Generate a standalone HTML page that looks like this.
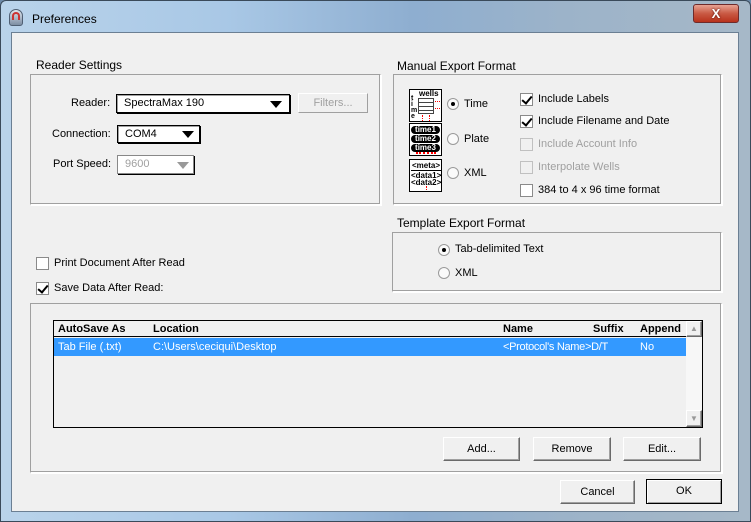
<!DOCTYPE html>
<html><head><meta charset="utf-8"><style>
*{box-sizing:border-box;margin:0;padding:0}
body{width:751px;height:522px;overflow:hidden;background:#6d8aa8;font-family:"Liberation Sans",Arial,sans-serif;font-size:11px;color:#000;position:relative}
.a{position:absolute}
.frame{left:0;top:0;width:751px;height:522px;background:linear-gradient(90deg,#b9d3ea 0%,#a9c8e6 30%,#8eaed0 55%,#9cb3c9 75%,#a6b8c8 100%);border:1px solid #3a4a5a;border-radius:6px 6px 0 0}
.content{left:11px;top:32px;width:728px;height:480px;background:#f0f0f0;border:1px solid #6b7f93}
.grp{position:absolute;border-top:1px solid #a0a0a0;border-left:1px solid #a0a0a0;border-right:1px solid #fff;border-bottom:1px solid #fff;box-shadow:inset -1px -1px 0 #a0a0a0, 1px 1px 0 #fff}
.t{position:absolute;white-space:nowrap}
.h{font-size:12px}
.cb{position:absolute;width:13px;height:13px;border:1px solid #8a8a8a;background:#fff}
.cb.d{background:#f0f0f0;border-color:#c0c0c0}
.ck:after{content:"";position:absolute;left:3px;top:0px;width:4px;height:8px;border:solid #000;border-width:0 2px 2px 0;transform:rotate(40deg)}
.rb{position:absolute;width:12px;height:12px;border:1px solid #9a9a9a;border-radius:50%;background:#fafafa}
.rb.on:after{content:"";position:absolute;left:3px;top:3px;width:4px;height:4px;border-radius:50%;background:#000}
.btn{position:absolute;background:#f0f0f0;border:1px solid;border-color:#fff #6a6a6a #6a6a6a #fff;box-shadow:inset -1px -1px 0 #a0a0a0;text-align:center;font-size:11px}
.combo{position:absolute;background:#fff;border:1px solid #000;box-shadow:1px 1px 0 #000, inset 1px 1px 0 #a0a0a0}
.tri{position:absolute;width:0;height:0;border-left:6px solid transparent;border-right:6px solid transparent;border-top:7px solid #000}
.icon{position:absolute;width:33px;height:33px;border:1px solid #000;background:#fff;font-size:8px;font-family:"Liberation Sans",sans-serif;font-weight:bold;overflow:hidden}
.gray{color:#a0a0a0}
</style></head><body>
<div class="a frame"></div>
<div class="a" style="left:9px;top:9px;width:14px;height:17px;border-radius:7px 7px 3px 3px;background:linear-gradient(#dfe6ef,#7d8ea3);border:1px solid #4f5f73"></div>
<div class="a" style="left:12px;top:12px;width:8px;height:8px;border:2px solid #c33;border-radius:50% 50% 0 0;border-bottom:none"></div>
<div class="t" style="left:32px;top:12px;font-size:12px">Preferences</div>
<div class="a" style="left:693px;top:4px;width:46px;height:19px;border:1px solid #6e2b2b;border-radius:3px;background:linear-gradient(#e8a393,#c95a44 50%,#b8321c);color:#fff;font-weight:bold;text-align:center;font-size:13px;line-height:17px;text-shadow:0 0 2px #400">X</div>
<div class="a content"></div>

<div class="t h" style="left:36px;top:58px">Reader Settings</div>
<div class="grp" style="left:30px;top:74px;width:351px;height:131px"></div>
<div class="t" style="left:71px;top:97px">Reader:</div>
<div class="combo" style="left:116px;top:94px;width:174px;height:19px"><span class="t" style="left:7px;top:2px">SpectraMax 190</span><div class="tri" style="left:153px;top:6px"></div></div>
<div class="btn gray" style="left:298px;top:93px;width:70px;height:20px;border-color:#fff #a0a0a0 #a0a0a0 #fff;box-shadow:none;line-height:18px">Filters...</div>
<div class="t" style="left:52px;top:128px">Connection:</div>
<div class="combo" style="left:117px;top:125px;width:83px;height:18px"><span class="t" style="left:7px;top:2px">COM4</span><div class="tri" style="left:64px;top:5px"></div></div>
<div class="t" style="left:53px;top:158px">Port Speed:</div>
<div class="combo" style="left:117px;top:155px;width:77px;height:19px;border-color:#888;box-shadow:1px 1px 0 #000"><span class="t gray" style="left:7px;top:2px">9600</span><div class="tri" style="left:59px;top:6px;border-top-color:#999"></div></div>

<div class="t h" style="left:397px;top:59px">Manual Export Format</div>
<div class="grp" style="left:393px;top:74px;width:329px;height:131px"></div>
<div class="icon" style="left:409px;top:89px"><span class="t" style="left:9px;top:-1px;font-size:8px">wells</span><span class="t" style="left:1px;top:6px;line-height:6px;font-size:7px">t<br>i<br>m<br>e</span><div class="a" style="left:8px;top:8px;width:16px;height:16px;border:1px solid #444;background:repeating-linear-gradient(#fff 0 3px,#444 3px 4px)"></div><div class="a" style="left:25px;top:11px;width:7px;border-top:1px dotted red"></div><div class="a" style="left:25px;top:18px;width:7px;border-top:1px dotted red"></div><div class="a" style="left:12px;top:25px;height:8px;border-left:1px dotted red"></div><div class="a" style="left:19px;top:25px;height:8px;border-left:1px dotted red"></div></div>
<div class="icon" style="left:409px;top:123px"><div class="a" style="left:1px;top:2px;width:29px;height:8px;background:#000;border-radius:4px;color:#fff;font-size:8px;line-height:8px;text-align:center">time1</div><div class="a" style="left:1px;top:11px;width:29px;height:8px;background:#000;border-radius:4px;color:#fff;font-size:8px;line-height:8px;text-align:center">time2</div><div class="a" style="left:1px;top:20px;width:29px;height:8px;background:#000;border-radius:4px;color:#fff;font-size:8px;line-height:8px;text-align:center">time3</div><div class="a" style="left:6px;top:28px;width:20px;height:4px;border-top:2px dotted red"></div></div>
<div class="icon" style="left:409px;top:159px;line-height:7px;font-size:8px"><span class="t" style="left:2px;top:2px">&lt;meta&gt;</span><div class="a" style="left:1px;top:10px;width:30px;border-top:1px solid #000"></div><span class="t" style="left:1px;top:12px">&lt;data1&gt;</span><span class="t" style="left:1px;top:19px">&lt;data2&gt;</span><div class="a" style="left:16px;top:26px;height:6px;border-left:1px dotted red"></div></div>
<div class="rb on" style="left:447px;top:98px"></div><div class="t" style="left:464px;top:98px">Time</div>
<div class="rb" style="left:447px;top:133px"></div><div class="t" style="left:464px;top:133px">Plate</div>
<div class="rb" style="left:447px;top:167px"></div><div class="t" style="left:464px;top:167px">XML</div>
<div class="cb ck" style="left:520px;top:93px"></div><div class="t" style="left:538px;top:93px">Include Labels</div>
<div class="cb ck" style="left:520px;top:115px"></div><div class="t" style="left:538px;top:115px">Include Filename and Date</div>
<div class="cb d" style="left:520px;top:138px"></div><div class="t gray" style="left:538px;top:138px">Include Account Info</div>
<div class="cb d" style="left:520px;top:161px"></div><div class="t gray" style="left:538px;top:161px">Interpolate Wells</div>
<div class="cb" style="left:520px;top:184px"></div><div class="t" style="left:538px;top:184px">384 to 4 x 96 time format</div>

<div class="t h" style="left:397px;top:216px">Template Export Format</div>
<div class="grp" style="left:392px;top:232px;width:330px;height:60px"></div>
<div class="rb on" style="left:438px;top:244px"></div><div class="t" style="left:455px;top:243px">Tab-delimited Text</div>
<div class="rb" style="left:438px;top:267px"></div><div class="t" style="left:455px;top:267px">XML</div>

<div class="cb" style="left:36px;top:257px"></div><div class="t" style="left:54px;top:257px">Print Document After Read</div>
<div class="cb ck" style="left:36px;top:282px"></div><div class="t" style="left:54px;top:282px">Save Data After Read:</div>

<div class="grp" style="left:30px;top:303px;width:692px;height:170px"></div>
<div class="a" style="left:53px;top:320px;width:650px;height:108px;border:1px solid #000;background:#f0f0f0"></div>
<div class="a" style="left:54px;top:321px;width:632px;height:16px;border-bottom:1px solid #000"></div>
<div class="t" style="left:58px;top:323px;font-weight:bold;font-size:11px">AutoSave As</div>
<div class="t" style="left:153px;top:323px;font-weight:bold;font-size:11px">Location</div>
<div class="t" style="left:503px;top:323px;font-weight:bold;font-size:11px">Name</div>
<div class="t" style="left:593px;top:323px;font-weight:bold;font-size:11px">Suffix</div>
<div class="t" style="left:640px;top:323px;font-weight:bold;font-size:11px">Append</div>
<div class="a" style="left:54px;top:338px;width:632px;height:18px;background:#3399ff"></div>
<div class="t" style="left:58px;top:341px;color:#fff;font-size:11px">Tab File (.txt)</div>
<div class="t" style="left:153px;top:341px;color:#fff;font-size:11px">C:\Users\ceciqui\Desktop</div>
<div class="t" style="left:503px;top:341px;color:#fff;font-size:11px;letter-spacing:-0.3px">&lt;Protocol's Name&gt;D/T</div>
<div class="t" style="left:640px;top:341px;color:#fff;font-size:11px">No</div>
<div class="a" style="left:686px;top:321px;width:16px;height:106px;background:#f7f7f7"></div>
<div class="btn" style="left:686px;top:321px;width:16px;height:16px;font-size:8px;color:#999;line-height:14px">▲</div>
<div class="btn" style="left:686px;top:410px;width:16px;height:17px;font-size:8px;color:#999;line-height:15px">▼</div>

<div class="btn" style="left:443px;top:437px;width:77px;height:24px;line-height:22px">Add...</div>
<div class="btn" style="left:533px;top:437px;width:78px;height:24px;line-height:22px">Remove</div>
<div class="btn" style="left:623px;top:437px;width:78px;height:24px;line-height:22px">Edit...</div>
<div class="btn" style="left:560px;top:480px;width:75px;height:24px;line-height:22px">Cancel</div>
<div class="btn" style="left:646px;top:479px;width:76px;height:25px;line-height:23px;border:1px solid #000;box-shadow:inset 1px 1px 0 #fff,inset -1px -1px 0 #a0a0a0">OK</div>
</body></html>
